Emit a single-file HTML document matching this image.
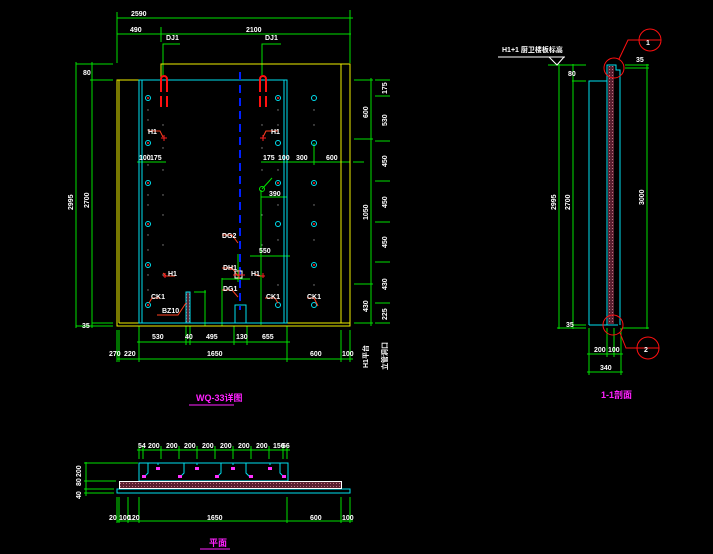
<!DOCTYPE html>
<html><head><meta charset="utf-8"><style>
html,body{margin:0;padding:0;background:#000;width:713px;height:554px;overflow:hidden}
svg{display:block}
text{font-family:"Liberation Sans","Noto Sans CJK SC",sans-serif;fill:#fff;font-size:7px;font-weight:bold}
</style></head><body>
<svg width="713" height="554" viewBox="0 0 713 554" xmlns="http://www.w3.org/2000/svg">
<defs>
<pattern id="h" width="3" height="3" patternUnits="userSpaceOnUse"><rect width="3" height="3" fill="#5a2030"/><rect width="1" height="1" fill="#c07080"/></pattern>
</defs>
<g stroke="#00e000" stroke-width="1" fill="none">
<!-- main top dims -->
<line x1="117" y1="18" x2="353" y2="18"/><line x1="117" y1="34" x2="351" y2="34"/>
<line x1="117" y1="12" x2="117" y2="63"/><line x1="350" y1="10" x2="350" y2="63"/>
<line x1="161" y1="27" x2="161" y2="42"/>
<polyline points="180,44 163,44 163,75"/><polyline points="281,44 262,44 262,75"/>
<!-- left dims -->
<line x1="76" y1="62" x2="76" y2="328"/><line x1="92" y1="62" x2="92" y2="328"/>
<line x1="76" y1="64" x2="113" y2="64"/><line x1="90" y1="80" x2="113" y2="80"/>
<line x1="92" y1="323" x2="113" y2="323"/><line x1="76" y1="326" x2="113" y2="326"/>
<!-- right dims -->
<line x1="371" y1="78" x2="371" y2="326"/>
<line x1="354" y1="80" x2="373" y2="80"/><line x1="354" y1="139" x2="373" y2="139"/><line x1="354" y1="284" x2="373" y2="284"/><line x1="354" y1="323" x2="373" y2="323"/>
<line x1="375" y1="80" x2="390" y2="80"/><line x1="375" y1="96" x2="390" y2="96"/><line x1="375" y1="141" x2="390" y2="141"/><line x1="375" y1="181" x2="390" y2="181"/><line x1="375" y1="222" x2="390" y2="222"/><line x1="375" y1="262" x2="390" y2="262"/><line x1="375" y1="303" x2="390" y2="303"/><line x1="375" y1="323" x2="390" y2="323"/>
<line x1="353" y1="162" x2="364" y2="162"/>
<!-- interior dims -->
<line x1="137" y1="162" x2="166" y2="162"/><line x1="261" y1="162" x2="350" y2="162"/>
<line x1="314" y1="143" x2="314" y2="165"/>
<line x1="261" y1="197" x2="287" y2="197"/><line x1="261" y1="190" x2="261" y2="325"/>
<line x1="250" y1="256" x2="290" y2="256"/><line x1="238" y1="279" x2="250" y2="279"/><line x1="222" y1="279" x2="238" y2="279"/><line x1="222" y1="278" x2="222" y2="326"/><line x1="238" y1="254" x2="238" y2="282"/>
<line x1="194" y1="292" x2="206" y2="292"/><line x1="205" y1="290" x2="205" y2="326"/>
<!-- bottom dims main -->
<line x1="137" y1="342" x2="290" y2="342"/><line x1="117" y1="359" x2="353" y2="359"/>
<line x1="117" y1="330" x2="117" y2="362"/><line x1="119" y1="330" x2="119" y2="362"/><line x1="139" y1="326" x2="139" y2="362"/><line x1="186" y1="326" x2="186" y2="345"/><line x1="190" y1="326" x2="190" y2="345"/><line x1="234" y1="326" x2="234" y2="345"/><line x1="247" y1="326" x2="247" y2="345"/><line x1="287" y1="326" x2="287" y2="362"/><line x1="341" y1="330" x2="341" y2="362"/><line x1="350" y1="330" x2="350" y2="362"/>
<!-- side view -->
<line x1="559" y1="64" x2="559" y2="329"/><line x1="573" y1="64" x2="573" y2="329"/>
<line x1="548" y1="65" x2="586" y2="65"/><line x1="572" y1="81" x2="586" y2="81"/><line x1="572" y1="325" x2="586" y2="325"/><line x1="557" y1="328" x2="586" y2="328"/>
<line x1="647" y1="64" x2="647" y2="329"/><line x1="625" y1="65" x2="649" y2="65"/><line x1="625" y1="68" x2="649" y2="68"/><line x1="622" y1="328" x2="649" y2="328"/>
<line x1="589" y1="328" x2="589" y2="375"/><line x1="621" y1="328" x2="621" y2="375"/><line x1="607" y1="328" x2="607" y2="357"/><line x1="614" y1="328" x2="614" y2="357"/>
<line x1="587" y1="354" x2="623" y2="354"/><line x1="587" y1="372" x2="623" y2="372"/>
<!-- plan view -->
<line x1="137" y1="450" x2="290" y2="450"/>
<g><line x1="139" y1="446" x2="139" y2="459"/><line x1="143" y1="446" x2="143" y2="459"/><line x1="161" y1="446" x2="161" y2="459"/><line x1="179" y1="446" x2="179" y2="459"/><line x1="197" y1="446" x2="197" y2="459"/><line x1="215" y1="446" x2="215" y2="459"/><line x1="233" y1="446" x2="233" y2="459"/><line x1="251" y1="446" x2="251" y2="459"/><line x1="269" y1="446" x2="269" y2="459"/><line x1="283" y1="446" x2="283" y2="459"/><line x1="287" y1="446" x2="287" y2="459"/></g>
<line x1="86" y1="462" x2="86" y2="496"/><line x1="84" y1="463" x2="138" y2="463"/><line x1="84" y1="481" x2="116" y2="481"/><line x1="84" y1="489" x2="114" y2="489"/><line x1="84" y1="493" x2="114" y2="493"/>
<line x1="117" y1="521" x2="353" y2="521"/>
<line x1="117" y1="497" x2="117" y2="523"/><line x1="119" y1="497" x2="119" y2="523"/><line x1="128" y1="497" x2="128" y2="523"/><line x1="139" y1="497" x2="139" y2="523"/><line x1="287" y1="497" x2="287" y2="523"/><line x1="341" y1="497" x2="341" y2="523"/><line x1="350" y1="497" x2="350" y2="523"/>
</g>
<!-- yellow -->
<g stroke="#f0f000" fill="none">
<polyline points="161,80 161,64 350,64 350,326 117,326 117,80 161,80"/>
<line x1="119" y1="80" x2="119" y2="323"/><line x1="119" y1="323" x2="350" y2="323"/><line x1="341" y1="64" x2="341" y2="323"/>
</g>
<!-- cyan main -->
<g stroke="#00e0f0" fill="none">
<rect x="139" y="80" width="148" height="243"/><line x1="142" y1="80" x2="142" y2="323"/><line x1="284" y1="80" x2="284" y2="323"/>
<rect x="186" y="292" width="4" height="31" fill="url(#h)" stroke="#00e0f0"/>
<rect x="235" y="305" width="11" height="18"/>
<!-- side -->
<polyline points="589,325 589,81 607,81"/><line x1="589" y1="325" x2="618" y2="325"/>
<polyline points="607,325 607,65 616,65 616,70 620,70 620,325"/>
<rect x="608" y="66" width="6" height="258" fill="url(#h)" stroke="none"/>
<!-- plan -->
<rect x="139" y="463" width="149" height="18"/>
<rect x="117" y="489" width="233" height="4"/>
<path d="M148 463v10l-4 4M158 463v2M184 463v10l-4 4M197 463v2M221 463v10l-4 4M233 463v2M246 463v10l4 4M270 463v2M280 463v10l4 4"/>
</g>
<rect x="119.5" y="481.5" width="222" height="7" fill="url(#h)" stroke="#fff" stroke-width="1"/>
<!-- plan pipe ends -->
<g fill="#ff30ff"><rect x="142" y="475" width="4" height="3"/><rect x="156" y="467" width="4" height="3"/><rect x="178" y="475" width="4" height="3"/><rect x="195" y="467" width="4" height="3"/><rect x="215" y="475" width="4" height="3"/><rect x="231" y="467" width="4" height="3"/><rect x="249" y="475" width="4" height="3"/><rect x="268" y="467" width="4" height="3"/><rect x="282" y="475" width="4" height="3"/></g>
<!-- blue dashed -->
<line x1="240" y1="72" x2="240" y2="310" stroke="#0020ff" stroke-width="2" stroke-dasharray="8,5"/>
<!-- red U -->
<g stroke="#ff1010" stroke-width="2" fill="none">
<path d="M161 92v-13a3 3 0 0 1 6 0v13M161 96v11M167 96v11"/>
<path d="M260 92v-13a3 3 0 0 1 6 0v13M260 96v11M266 96v11"/>
</g>
<!-- dots -->
<g fill="#888"><circle cx="148" cy="110" r="0.7"/><circle cx="148" cy="120" r="0.7"/><circle cx="148" cy="130" r="0.7"/><circle cx="148" cy="155" r="0.7"/><circle cx="148" cy="165" r="0.7"/><circle cx="148" cy="195" r="0.7"/><circle cx="148" cy="205" r="0.7"/><circle cx="148" cy="235" r="0.7"/><circle cx="148" cy="250" r="0.7"/><circle cx="148" cy="275" r="0.7"/><circle cx="148" cy="290" r="0.7"/>
<circle cx="163" cy="125" r="0.7"/><circle cx="163" cy="148" r="0.7"/><circle cx="163" cy="170" r="0.7"/><circle cx="163" cy="195" r="0.7"/><circle cx="163" cy="215" r="0.7"/><circle cx="163" cy="245" r="0.7"/><circle cx="163" cy="275" r="0.7"/>
<circle cx="262" cy="125" r="0.7"/><circle cx="262" cy="148" r="0.7"/><circle cx="262" cy="170" r="0.7"/><circle cx="262" cy="215" r="0.7"/><circle cx="262" cy="245" r="0.7"/>
<circle cx="278" cy="110" r="0.7"/><circle cx="278" cy="125" r="0.7"/><circle cx="278" cy="170" r="0.7"/><circle cx="278" cy="205" r="0.7"/><circle cx="278" cy="240" r="0.7"/><circle cx="278" cy="285" r="0.7"/>
<circle cx="314" cy="110" r="0.7"/><circle cx="314" cy="125" r="0.7"/><circle cx="314" cy="205" r="0.7"/><circle cx="314" cy="240" r="0.7"/><circle cx="314" cy="285" r="0.7"/></g>
<g fill="none" stroke="#00e0f0" stroke-width="1">
<circle cx="148" cy="98" r="2.5"/><circle cx="148" cy="143" r="2.5"/><circle cx="148" cy="183" r="2.5"/><circle cx="148" cy="224" r="2.5"/><circle cx="148" cy="265" r="2.5"/><circle cx="148" cy="305" r="2.5"/>
<circle cx="278" cy="98" r="2.5"/><circle cx="278" cy="143" r="2.5"/><circle cx="278" cy="183" r="2.5"/><circle cx="278" cy="224" r="2.5"/><circle cx="278" cy="305" r="2.5"/>
<circle cx="314" cy="98" r="2.5"/><circle cx="314" cy="143" r="2.5"/><circle cx="314" cy="183" r="2.5"/><circle cx="314" cy="224" r="2.5"/><circle cx="314" cy="265" r="2.5"/><circle cx="314" cy="305" r="2.5"/>
</g>
<g fill="#ff2020"><circle cx="148" cy="98" r="1"/><circle cx="148" cy="143" r="1"/><circle cx="148" cy="183" r="1"/><circle cx="148" cy="224" r="1"/><circle cx="148" cy="265" r="1"/><circle cx="148" cy="305" r="1"/><circle cx="278" cy="98" r="1"/><circle cx="278" cy="183" r="1"/><circle cx="314" cy="183" r="1"/><circle cx="314" cy="224" r="1"/><circle cx="314" cy="265" r="1"/></g>
<!-- red leaders -->
<g stroke="#ff4020" fill="none" stroke-width="1">
<polyline points="148,131 160,131 163,137"/><polyline points="278,131 266,131 263,137"/>
<polyline points="163,273 166,276 175,276"/><polyline points="262,276 259,276 255,274"/>
<polyline points="149,303 152,298 160,298"/><polyline points="278,303 275,298 265,298"/><polyline points="318,306 314,298 307,298"/>
<polyline points="157,315 178,315 186,303"/>
<polyline points="222,235 232,235 238,243"/><polyline points="222,268 232,268 238,276"/><polyline points="222,290 232,290 238,297"/>
<polyline points="233,266 230,270"/>
</g>
<g stroke="#ff2020" fill="none"><path d="M161 138h6M164 135v6M260 138h6M263 135v6M163 276h4M165 273v5M261 276h4M263 273v5"/></g>
<rect x="235" y="271" width="7" height="7" stroke="#fff" fill="none"/><path d="M233 275h12M239 270v9" stroke="#ff2020"/>
<circle cx="262" cy="189" r="2.5" stroke="#00e000" fill="none"/><line x1="262" y1="189" x2="272" y2="178" stroke="#00e000"/>
<!-- side red circles -->
<g stroke="#ff1010" fill="none">
<circle cx="614" cy="68" r="10"/><circle cx="650" cy="40" r="11"/><line x1="639" y1="40" x2="661" y2="40"/><polyline points="619,59 628,40 639,40"/>
<circle cx="613" cy="325" r="10"/><circle cx="648" cy="348" r="11"/><line x1="637" y1="348" x2="659" y2="348"/><polyline points="620,333 626,348 637,348"/>
</g>
<line x1="498" y1="57" x2="565" y2="57" stroke="#fff"/><polyline points="549,57 557,65 564,57" stroke="#fff" fill="none"/>
<!-- text -->
<text x="131" y="16">2590</text>
<text x="130" y="32">490</text><text x="246" y="32">2100</text>
<text x="166" y="40">DJ1</text><text x="265" y="40">DJ1</text>
<text x="148" y="134">H1</text><text x="271" y="134">H1</text>
<text x="139" y="160">100</text><text x="150" y="160">175</text><text x="263" y="160">175</text><text x="278" y="160">100</text><text x="296" y="160">300</text><text x="326" y="160">600</text>
<text x="269" y="196">390</text><text x="259" y="253">550</text>
<text x="222" y="238">DG2</text><text x="223" y="270">DH1</text><text x="223" y="291">DG1</text>
<text x="168" y="276">H1</text><text x="251" y="276">H1</text>
<text x="151" y="299">CK1</text><text x="266" y="299">CK1</text><text x="307" y="299">CK1</text>
<text x="162" y="313">BZ10</text>
<text x="152" y="339">530</text><text x="185" y="339">40</text><text x="206" y="339">495</text><text x="236" y="339">130</text><text x="262" y="339">655</text>
<text x="109" y="356">270</text><text x="124" y="356">220</text><text x="207" y="356">1650</text><text x="310" y="356">600</text><text x="342" y="356">100</text>
<text x="83" y="75">80</text><text x="82" y="328">35</text>
<text transform="translate(73,210) rotate(-90)">2995</text><text transform="translate(89,208) rotate(-90)">2700</text>
<text transform="translate(368,118) rotate(-90)">600</text><text transform="translate(368,220) rotate(-90)">1050</text><text transform="translate(368,312) rotate(-90)">430</text>
<text transform="translate(387,94) rotate(-90)">175</text><text transform="translate(387,126) rotate(-90)">530</text><text transform="translate(387,167) rotate(-90)">450</text><text transform="translate(387,208) rotate(-90)">450</text><text transform="translate(387,248) rotate(-90)">450</text><text transform="translate(387,290) rotate(-90)">430</text><text transform="translate(387,320) rotate(-90)">225</text>
<text transform="translate(368,368) rotate(-90)">H1平台</text><text transform="translate(387,370) rotate(-90)">立管洞口</text>
<text x="196" y="401" style="fill:#ff20ff;font-size:9px">WQ-33详图</text>
<line x1="189" y1="405" x2="234" y2="405" stroke="#ff20ff"/>
<!-- side text -->
<text x="502" y="52">H1+1 厨卫楼板标高</text>
<text x="568" y="76">80</text><text x="566" y="327">35</text><text x="636" y="62">35</text>
<text transform="translate(556,210) rotate(-90)">2995</text><text transform="translate(570,210) rotate(-90)">2700</text><text transform="translate(644,205) rotate(-90)">3000</text>
<text x="646" y="45">1</text><text x="644" y="352">2</text>
<text x="594" y="352">200</text><text x="608" y="352">100</text><text x="600" y="370">340</text>
<text x="601" y="398" style="fill:#ff20ff;font-size:9px">1-1剖面</text>
<!-- plan text -->
<text x="138" y="448">54</text><text x="148" y="448">200</text><text x="166" y="448">200</text><text x="184" y="448">200</text><text x="202" y="448">200</text><text x="220" y="448">200</text><text x="238" y="448">200</text><text x="256" y="448">200</text><text x="273" y="448">156</text><text x="282" y="448">56</text>
<text x="109" y="520">20</text><text x="119" y="520">100</text><text x="128" y="520">120</text><text x="207" y="520">1650</text><text x="310" y="520">600</text><text x="342" y="520">100</text>
<text transform="translate(81,477) rotate(-90)">200</text><text transform="translate(81,486) rotate(-90)">80</text><text transform="translate(81,499) rotate(-90)">40</text>
<text x="209" y="546" style="fill:#ff20ff;font-size:9px">平面</text>
<line x1="200" y1="549" x2="230" y2="549" stroke="#ff20ff"/>
</svg>
</body></html>
